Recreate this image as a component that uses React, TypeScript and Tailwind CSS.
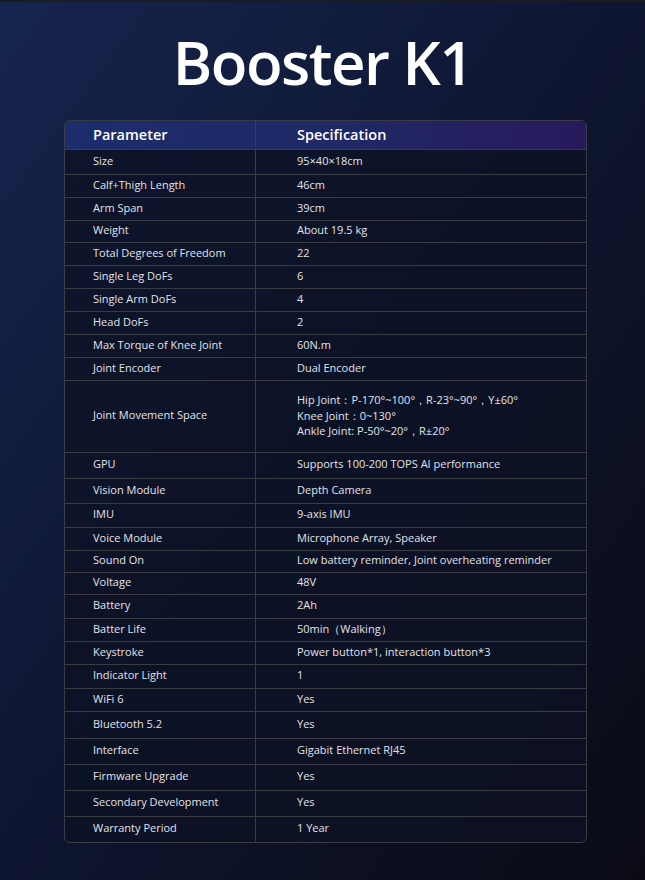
const rows: { k: string; v: React.ReactNode; h: string }[] = [
  { k: 'Size', v: '95×40×18cm', h: 'h-[25px]' },
  { k: 'Calf+Thigh Length', v: '46cm', h: 'h-[23px]' },
  { k: 'Arm Span', v: '39cm', h: 'h-[23px]' },
  { k: 'Weight', v: 'About 19.5 kg', h: 'h-[22px]' },
  { k: 'Total Degrees of Freedom', v: '22', h: 'h-[23px]' },
  { k: 'Single Leg DoFs', v: '6', h: 'h-[23px]' },
  { k: 'Single Arm DoFs', v: '4', h: 'h-[23px]' },
  { k: 'Head DoFs', v: '2', h: 'h-[23px]' },
  { k: 'Max Torque of Knee Joint', v: '60N.m', h: 'h-[23px]' },
  { k: 'Joint Encoder', v: 'Dual Encoder', h: 'h-[23px]' },
  {
    k: 'Joint Movement Space',
    v: (
      <div className="leading-[15.5px]">
        <div>Hip Joint：P-170°~100°，R-23°~90°，Y±60°</div>
        <div>Knee Joint：0~130°</div>
        <div>Ankle Joint: P-50°~20°，R±20°</div>
      </div>
    ),
    h: 'h-[72px]',
  },
  { k: 'GPU', v: 'Supports 100-200 TOPS AI performance', h: 'h-[26px]' },
  { k: 'Vision Module', v: 'Depth Camera', h: 'h-[25px]' },
  { k: 'IMU', v: '9-axis IMU', h: 'h-[24px]' },
  { k: 'Voice Module', v: 'Microphone Array, Speaker', h: 'h-[23px]' },
  { k: 'Sound On', v: 'Low battery reminder, Joint overheating reminder', h: 'h-[22px]' },
  { k: 'Voltage', v: '48V', h: 'h-[22px]' },
  { k: 'Battery', v: '2Ah', h: 'h-[24px]' },
  { k: 'Batter Life', v: '50min（Walking）', h: 'h-[23px]' },
  { k: 'Keystroke', v: 'Power button*1, interaction button*3', h: 'h-[23px]' },
  { k: 'Indicator Light', v: '1', h: 'h-[24px]' },
  { k: 'WiFi 6', v: 'Yes', h: 'h-[23px]' },
  { k: 'Bluetooth 5.2', v: 'Yes', h: 'h-[27px]' },
  { k: 'Interface', v: 'Gigabit Ethernet RJ45', h: 'h-[26px]' },
  { k: 'Firmware Upgrade', v: 'Yes', h: 'h-[26px]' },
  { k: 'Secondary Development', v: 'Yes', h: 'h-[26px]' },
  { k: 'Warranty Period', v: '1 Year', h: 'h-[26px]' },
]

export default function App() {
  return (
    <div
      className="w-[645px] h-[880px] overflow-hidden bg-gradient-to-br from-[#16254f] via-[#0e1530] to-[#0a0b15] text-[#e2e3e8]"
      style={{ fontFamily: '"Open Sans", "Noto Sans", sans-serif' }}
    >
      <div className="h-[2px] bg-[#1b1b22]" />
      <h1 className="pt-[24px] h-[118px] text-center text-[60px] leading-[72px] font-semibold tracking-[-1.5px] text-white">
        Booster K1
      </h1>

      <div className="mx-[64px] w-[523px] rounded-[6px] border border-[#3b3b44] bg-[#0d1124]/80 overflow-hidden">
        {/* header */}
        <div className="grid grid-cols-[191px_1fr] h-[28px] bg-gradient-to-r from-[#1c2d6c] via-[#1f2966] to-[#27195c] text-white text-[14.5px] font-semibold">
          <div className="flex items-center pl-[28px] border-r border-[#3b3b44]">Parameter</div>
          <div className="flex items-center pl-[41px]">Specification</div>
        </div>
        {rows.map((r) => (
          <div
            key={r.k}
            className={`grid grid-cols-[191px_1fr] border-t border-[#3b3b44] text-[11px] ${r.h}`}
          >
            <div className="flex items-center pl-[28px] pb-[2px] border-r border-[#3b3b44]">{r.k}</div>
            <div className="flex items-center pl-[41px] pb-[2px]">{r.v}</div>
          </div>
        ))}
      </div>
    </div>
  )
}
